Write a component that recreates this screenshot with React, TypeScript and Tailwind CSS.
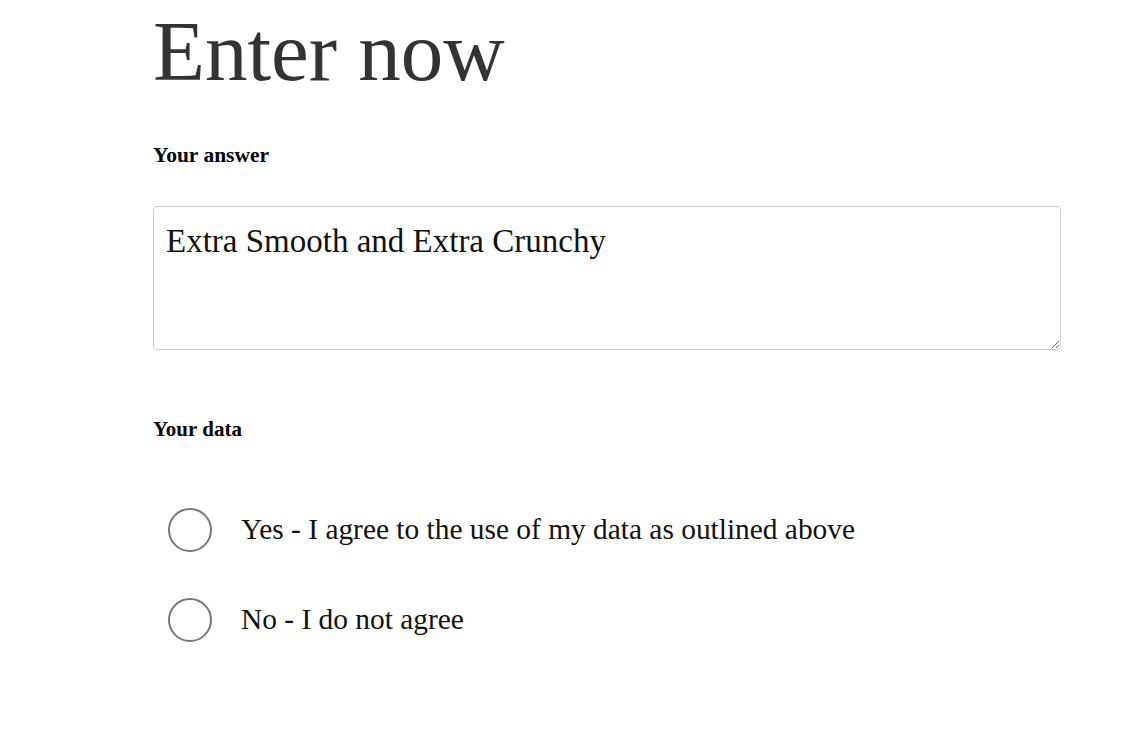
import React, { useState } from 'react';

const serif = { fontFamily: '"Liberation Serif", "DejaVu Serif", serif' };

export default function App() {
  const [answer, setAnswer] = useState('Extra Smooth and Extra Crunchy');
  const [consent, setConsent] = useState<string | null>(null);

  const options = [
    { id: 'yes', label: 'Yes - I agree to the use of my data as outlined above' },
    { id: 'no', label: 'No - I do not agree' },
  ];

  return (
    <div className="min-h-screen bg-white" style={serif}>
      <div className="ml-[153px] w-[908px] pt-[9px]">
        <h1 className="text-[85px] leading-none text-[#333] font-normal">Enter now</h1>

        <label className="block mt-[51px] text-[21.5px] leading-none font-bold text-black">Your answer</label>
        <textarea
          value={answer}
          onChange={e => setAnswer(e.target.value)}
          className="block mt-[39px] w-full h-[144px] border border-[#ccc] rounded-[4px] pt-[18px] px-[12px] text-[33px] leading-none text-[#111] outline-none"
          style={serif}
        />

        <div className="mt-[69px] text-[21px] leading-none font-bold text-black">Your data</div>

        <div className="mt-[68px] flex flex-col gap-[46px] pl-[15px]">
          {options.map(o => (
            <label key={o.id} className="flex items-center gap-[29px] cursor-pointer">
              <input
                type="radio"
                name="consent"
                checked={consent === o.id}
                onChange={() => setConsent(o.id)}
                className="appearance-none w-[44px] h-[44px] rounded-full border-2 border-[#777] bg-white checked:bg-[#333] shrink-0"
              />
              <span className="text-[29.4px] leading-none text-[#111]">{o.label}</span>
            </label>
          ))}
        </div>
      </div>
    </div>
  );
}
